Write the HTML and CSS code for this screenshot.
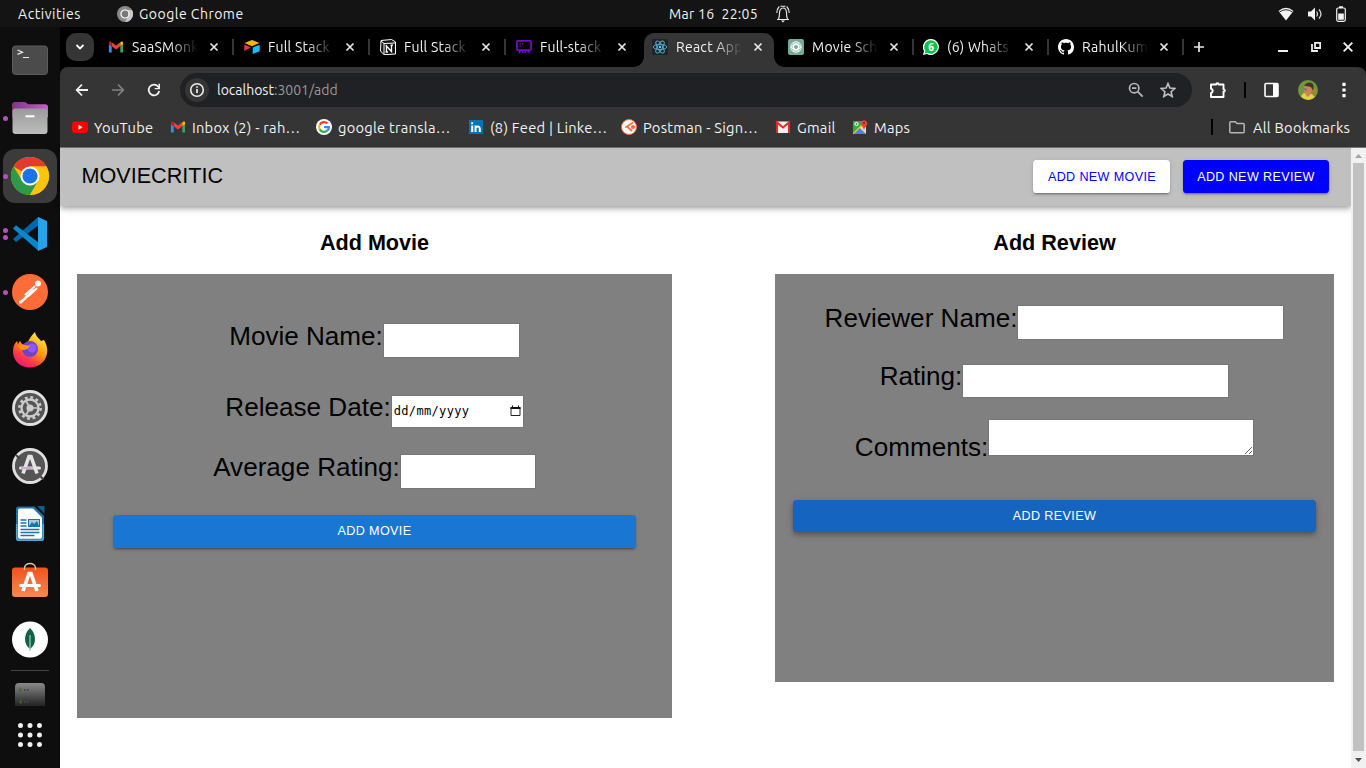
FILE: index.html
```html
<!DOCTYPE html>
<html lang="en">
<head>
<meta charset="utf-8">
<title>React App</title>
<link rel="stylesheet" href="styles.css">
</head>
<body>
<svg class="defs" width="0" height="0">
  <defs>
    <symbol id="gmail" viewBox="0 0 16 16"><path fill="#4285f4" d="M1 13.5h2.700V7.200L0.900 5v7.600q0 .9.100.9z"/><path fill="#34a853" d="M12.300 13.500H15V5l-2.700 2.200z"/><path fill="#ea4335" d="M3.700 7.300V3.200L8 6.400l4.300-3.200v4.100L8 10.600z"/><path fill="#c5221f" d="M.9 4c0-1.600 1.600-1.900 2.800-.8v4.100L.9 5.200z"/><path fill="#fbbc04" d="M15.100 4c0-1.600-1.600-1.900-2.800-.8v4.100l2.800-2.100z"/></symbol>
    <symbol id="close" viewBox="0 0 10 10"><path d="M1.500 1.500l7 7M8.500 1.500l-7 7" stroke="#e8e8e8" stroke-width="1.700" fill="none"/></symbol>
    <linearGradient id="silver" x2="0" y2="1"><stop stop-color="#9a9a9a"/><stop offset="1" stop-color="#bdbdbd"/></linearGradient>
    <linearGradient id="purple"><stop stop-color="#7f3583"/><stop offset="1" stop-color="#c660cc"/></linearGradient>
    <linearGradient id="fox" x1=".8" x2=".2" y2="1"><stop stop-color="#fff44f"/><stop offset=".45" stop-color="#ff980e"/><stop offset=".75" stop-color="#ff3647"/><stop offset="1" stop-color="#e31587"/></linearGradient>
    <linearGradient id="orange" x2="0" y2="1"><stop stop-color="#f4511e"/><stop offset="1" stop-color="#f58a50"/></linearGradient>
    <linearGradient id="disk" x2="0" y2="1"><stop stop-color="#8a8a8a"/><stop offset="1" stop-color="#222"/></linearGradient>
  </defs>
</svg>

<header class="topbar">
  <span class="activities">Activities</span>
  <svg class="app-icon" width="16" height="16" viewBox="0 0 16 16"><circle cx="8" cy="8" r="8" fill="#8b8b8b"/><path d="M8 4h7A8 8 0 0 1 8 16l3.500-6z" fill="#c9c9c9"/><circle cx="8" cy="8" r="4" fill="#777" stroke="#fff" stroke-width="1.200"/></svg>
  <span class="app-name">Google Chrome</span>
  <span class="clock">Mar 16&nbsp; 22:05</span>
  <svg class="bell" width="14" height="18" viewBox="0 0 14 18" fill="none" stroke="#eee" stroke-width="1.100"><path d="M1 14.500h12M2.500 14c1-2 1-3 1-6 0-3 1.500-5 3.500-5s3.500 2 3.500 5c0 3 0 4 1 6M.8 8c0-3 1-5 2.500-6.500M13.200 8c0-3-1-5-2.500-6.500M4.500 1.200h5"/><path d="M5 15.500h4l-2 2z" fill="#eee" stroke="none"/></svg>
  <div class="status">
    <svg width="16" height="14" viewBox="0 0 16 14"><path d="M.5 4Q8-2.500 15.500 4L8 13.500z" fill="#f2f2f2"/><path d="M1.500 5Q8 .500 14.500 5" stroke="#141414" stroke-width=".9" fill="none"/></svg>
    <svg width="16" height="14" viewBox="0 0 16 14"><path d="M1 4.500h3l4-4v13l-4-4H1z" fill="#f2f2f2"/><path d="M9.500 4.500q2 2.500 0 5M12 2.500q4 4.500 0 9" stroke="#ddd" stroke-width="1.200" fill="none"/></svg>
    <svg width="10" height="16" viewBox="0 0 10 16"><rect x=".7" y="2" width="8.600" height="13.300" rx="1.500" fill="none" stroke="#f2f2f2" stroke-width="1.200"/><path d="M3 .3h4V2H3zM2.200 7.500h5.600v6.200H2.200z" fill="#f2f2f2"/></svg>
  </div>
</header>

<div class="desktop">
  <nav class="dock">
    <div class="dock-item"><svg viewBox="0 0 60 58"><rect x="12.500" y="15" width="35" height="28.500" rx="3" fill="#4b4b4b" stroke="#5c5c5c"/><path d="M17.500 19l5 2.200-5 2.200M23 26.500h6" stroke="#eee" stroke-width="1.200" fill="none"/></svg></div>
    <div class="dock-item"><i class="dot"></i><svg viewBox="0 0 60 58"><path d="M12 16q0-3 3-3h9q2 0 4 2.200h17q3 0 3 3v10H12z" fill="url(#purple)"/><rect x="12.500" y="19.500" width="35" height="25.500" rx="3" fill="url(#silver)"/><path d="M25.500 27.300h9" stroke="#fff" stroke-width="2"/></svg></div>
    <div class="dock-item active"><i class="dot"></i><svg viewBox="0 0 60 58"><circle cx="30" cy="29" r="19" fill="#fbbc04"/><path d="M30 29L13.500 19.500A19 19 0 0 1 46.500 19.500H30z" fill="#e33b2e"/><path d="M13.500 19.500A19 19 0 0 0 30 48l8.200-14.300L30 29 22 33.500z" fill="#2c9a48"/><path d="M30 19.500h16.500A19 19 0 0 1 30 48l8.200-14.200z" fill="#fdc40e"/><circle cx="30" cy="29" r="9.500" fill="#fff"/><circle cx="30" cy="29" r="7.600" fill="#1a73e8"/></svg></div>
    <div class="dock-item"><i class="dot"></i><i class="dot"></i><svg viewBox="0 0 60 58"><path d="M13 34l3 3L39 20v-8L37.500 12.500z" fill="#0065a9"/><path d="M13 23.500l3-3.200L39 38v8L37.500 45z" fill="#0787cc"/><path d="M38 12l9 4v26l-9 4z" fill="#24a4ef"/></svg></div>
    <div class="dock-item"><i class="dot"></i><svg viewBox="0 0 60 58"><circle cx="30" cy="29" r="18" fill="#ff6c37"/><circle cx="38" cy="20.500" r="2.900" fill="#fff"/><path d="M34.500 23.500L25.500 31.500M36.500 25.500L29 32.500" stroke="#fff" stroke-width="2" stroke-linecap="round"/><path d="M20.500 39.500L34 27" stroke="#fff" stroke-width="2.400"/><circle cx="20.500" cy="39" r="1.500" fill="#fff"/></svg></div>
    <div class="dock-item"><svg viewBox="0 0 60 58"><path d="M13 30c0-5 2-8 4-10l1 3 2-3 2 3 5 1c1-5 4-9 8-13 1 5 4 6 6 9l3-1c5 8 4 16-1 22-8 8-21 7-27-1-2-3-3-6-3-10z" fill="url(#fox)"/><circle cx="30" cy="28" r="8" fill="#7540c8"/><circle cx="32" cy="27" r="4.500" fill="#9059ff"/><path d="M18 25q6-2 12 0-2 3-6 4-4 0-6-4z" fill="#ff980e"/></svg></div>
    <div class="dock-item"><svg viewBox="0 0 60 58"><circle cx="30" cy="29" r="16.500" fill="#555" stroke="#e0e0e0" stroke-width="2.800"/><circle cx="30" cy="29" r="10.600" fill="none" stroke="#ccc" stroke-width="2.600" stroke-dasharray="2.800 2.750"/><circle cx="30" cy="29" r="8.500" fill="none" stroke="#ccc" stroke-width="2.300"/><circle cx="30" cy="29" r="3.600" fill="#ccc"/><path d="M30 29h8M30 29l-4-7M30 29l-4 7" stroke="#ccc" stroke-width="1.700"/></svg></div>
    <div class="dock-item"><svg viewBox="0 0 60 58"><circle cx="30" cy="29" r="16.500" fill="#555" stroke="#e0e0e0" stroke-width="2.800"/><path d="M16 18l3.500 3.500M40.500 39.500l3 3" stroke="#444" stroke-width="2"/><path d="M23 36.500l6-17h2l6 17" fill="none" stroke="#e4e4e4" stroke-width="3.600"/><path d="M20.500 31h19" stroke="#e4e4e4" stroke-width="3" stroke-linecap="round"/><path d="M21 31h12" stroke="#cf9bd0" stroke-width="1.600"/></svg></div>
    <div class="dock-item"><svg viewBox="0 0 60 58"><path d="M18.500 11.500h16L44 21v22q0 3-3 3H19q-3 0-3-3V14q0-2.500 2.500-2.500z" fill="#1d73a8"/><path d="M19.500 13.500H33l9 9V42q0 1.800-1.800 1.800H19.500Q18 43.800 18 42V15q0-1.500 1.500-1.500z" fill="#fff"/><path d="M37 11h7.500v7.500z" fill="#0f5d91"/><path d="M16.700 29v14q0 2.300 2.300 2.300h22q2.300 0 2.300-2.300V29" fill="none" stroke="#52a9d6" stroke-width="1.600"/><path d="M20.500 25h6M20.500 28h6M20.500 31h6M20.500 34.500h19M20.500 37.500h19M20.500 40.500h14" stroke="#1d73a8" stroke-width="1.300"/><rect x="28.500" y="24.500" width="11" height="7" fill="#9bd0ed" stroke="#1d73a8"/><path d="M29 31l3-4 2 2 3-3 2 5z" fill="#1d73a8"/></svg></div>
    <div class="dock-item"><svg viewBox="0 0 60 58"><rect x="12" y="14.500" width="36" height="29.500" rx="3" fill="url(#orange)"/><path d="M24.500 17V15a5.500 4.500 0 0 1 11 0v2" fill="none" stroke="#e8c59e" stroke-width="1.400"/><path d="M23 38l6-17.500h2L37 38" fill="none" stroke="#fff" stroke-width="3.600"/><path d="M20.500 32.500h19" stroke="#fff" stroke-width="3" stroke-linecap="round"/></svg></div>
    <div class="dock-item"><svg viewBox="0 0 60 58"><circle cx="30" cy="28.500" r="18" fill="#fff"/><path d="M30 17q5 5 5 11 0 6-5 10-5-4-5-10 0-6 5-11z" fill="#116149"/><path d="M30 24v16" stroke="#9bc7ad" stroke-width="1.300"/></svg></div>
    <div class="dock-line"></div>
    <svg class="dock-disk" width="30" height="23" viewBox="0 0 30 23"><path d="M0 23V4q0-4 4-4h22q4 0 4 4v19z" fill="url(#disk)"/><path d="M4.500 7h2M4.500 19h2" stroke="#3f6a1f" stroke-width="3"/><path d="M9 7h1.500M12 7h1.500M9 19h1.500M12 19h1.500" stroke="#444" stroke-width="2"/></svg>
    <svg class="dock-grid" width="24" height="24" viewBox="0 0 24 24"><path d="M2.500 2.500h.01M12 2.500h.01M21.500 2.500h.01M2.500 12h.01M12 12h.01M21.500 12h.01M2.500 21.500h.01M12 21.500h.01M21.500 21.500h.01" stroke="#f0f0f0" stroke-width="5" stroke-linecap="round"/></svg>
  </nav>

  <main class="browser">
    <div class="tabstrip">
      <div class="tab-search"><svg width="10" height="8" viewBox="0 0 10 8"><path d="M1.500 2L5 5.500 8.500 2" stroke="#fff" stroke-width="1.800" fill="none"/></svg></div>
      <div class="tabs">
        <div class="tab sep"><svg class="fav"><use href="#gmail"/></svg><span class="tab-label">SaaSMonk</span><svg class="x"><use href="#close"/></svg></div>
        <div class="tab sep"><svg class="fav" viewBox="0 0 16 16"><path d="M8 1l7.500 3L8 7.200.5 4z" fill="#fcb400"/><path d="M8.700 8.500L15.700 5.700v6.500l-7 2.800z" fill="#18bfff"/><path d="M.3 5.500l6.500 3L.3 12z" fill="#f82b60"/></svg><span class="tab-label">Full Stack</span><svg class="x"><use href="#close"/></svg></div>
        <div class="tab sep"><svg class="fav" viewBox="0 0 16 16"><path d="M1 1.500L11.500.500 15.500 3v12L4 15.700.5 12z" fill="#111" stroke="#fff"/><path d="M1 2l3 2.500v11M4 4.500L15 4" fill="none" stroke="#fff"/><path d="M6.500 13V7l5 5.500V6.200M5.500 6.800H7M10.500 6.200h2.500M5.500 13H8" stroke="#fff" stroke-width="1.300" fill="none"/></svg><span class="tab-label">Full Stack</span><svg class="x"><use href="#close"/></svg></div>
        <div class="tab"><svg class="fav" viewBox="0 0 16 16"><rect x=".9" y="1.900" width="14.200" height="9.200" rx="1" fill="none" stroke="#6f0fbe" stroke-width="1.800"/><path d="M3.500 4.900h1.300M6 4.900h1.300M3.500 7.400h1.300" stroke="#6f0fbe" stroke-width="1.400"/><path d="M4.500 11L3 14M7 11v3M9.500 11v3M11.500 11l2 3" stroke="#6f0fbe" stroke-width="1.700"/></svg><span class="tab-label">Full-stack</span><svg class="x"><use href="#close"/></svg></div>
        <div class="tab current"><svg class="fav" viewBox="0 0 16 16"><rect width="16" height="16" rx="2" fill="#20232a"/><g fill="none" stroke="#4fb3cf" stroke-width=".9"><ellipse cx="8" cy="8" rx="6.800" ry="2.600"/><ellipse cx="8" cy="8" rx="6.800" ry="2.600" transform="rotate(60 8 8)"/><ellipse cx="8" cy="8" rx="6.800" ry="2.600" transform="rotate(120 8 8)"/></g><circle cx="8" cy="8" r="1.200" fill="#61dafb"/></svg><span class="tab-label">React App</span><svg class="x"><use href="#close"/></svg></div>
        <div class="tab sep narrow"><svg class="fav" viewBox="0 0 16 16"><rect width="16" height="16" rx="2" fill="#74aa9c"/><g fill="none" stroke="#fff" stroke-width=".8"><rect x="5" y="2.500" width="6" height="8" rx="3"/><rect x="5" y="2.500" width="6" height="8" rx="3" transform="rotate(60 8 8)"/><rect x="5" y="2.500" width="6" height="8" rx="3" transform="rotate(120 8 8)"/><rect x="5" y="2.500" width="6" height="8" rx="3" transform="rotate(180 8 8)"/><rect x="5" y="2.500" width="6" height="8" rx="3" transform="rotate(240 8 8)"/><rect x="5" y="2.500" width="6" height="8" rx="3" transform="rotate(300 8 8)"/></g></svg><span class="tab-label">Movie Sch</span><svg class="x"><use href="#close"/></svg></div>
        <div class="tab sep narrow"><svg class="fav" viewBox="0 0 16 16"><path d="M8 0a8 8 0 1 1-4 15L0 16l1-4A8 8 0 0 1 8 0z" fill="#fff"/><path d="M8 1.200a6.800 6.800 0 1 1-3.600 12.600l-2.700.6.700-2.600A6.800 6.800 0 0 1 8 1.200z" fill="#0bc34b"/><text x="8" y="12" text-anchor="middle" class="badge">6</text></svg><span class="tab-label">(6) Whats</span><svg class="x"><use href="#close"/></svg></div>
        <div class="tab sep narrow"><svg class="fav" viewBox="0 0 16 16"><path fill="#fff" d="M8 0C3.580 0 0 3.580 0 8c0 3.540 2.290 6.530 5.470 7.590.4.070.55-.17.55-.38 0-.19-.010-.82-.010-1.490-2.010.37-2.530-.49-2.690-.94-.09-.23-.48-.94-.82-1.130-.28-.15-.68-.52-.010-.53.63-.010 1.080.58 1.230.82.72 1.210 1.870.87 2.330.66.070-.52.28-.87.51-1.070-1.780-.2-3.640-.89-3.640-3.950 0-.87.31-1.590.82-2.150-.080-.2-.36-1.020.080-2.120 0 0 .67-.21 2.200.82.64-.18 1.320-.27 2-.27s1.360.09 2 .27c1.530-1.040 2.200-.82 2.200-.82.44 1.100.16 1.920.080 2.120.51.56.82 1.270.82 2.150 0 3.070-1.870 3.750-3.650 3.950.29.25.54.73.54 1.480 0 1.070-.010 1.930-.010 2.200 0 .21.15.46.55.38A8 8 0 0 0 16 8c0-4.420-3.580-8-8-8z"/></svg><span class="tab-label">RahulKum</span><svg class="x"><use href="#close"/></svg></div>
      </div>
      <svg class="new-tab" width="12" height="12" viewBox="0 0 12 12"><path d="M6 1v10M1 6h10" stroke="#e8e8e8" stroke-width="1.700"/></svg>
      <div class="win-buttons">
        <svg width="10" height="12" viewBox="0 0 10 12"><path d="M0 10h10" stroke="#eee" stroke-width="2"/></svg>
        <svg width="10" height="12" viewBox="0 0 10 12"><path d="M4 1.800h5.200V7H4zM1 3v7h6" fill="none" stroke="#eee" stroke-width="1.800"/></svg>
        <svg width="10" height="12" viewBox="0 0 10 12"><path d="M.7 1.700l8.600 8.600M9.300 1.700L.7 10.300" stroke="#eee" stroke-width="1.900"/></svg>
      </div>
    </div>

    <div class="toolbar">
      <div class="nav-buttons">
        <svg width="14" height="14" viewBox="0 0 14 14"><path d="M7 1.500L1.700 7 7 12.500M2 7h11" stroke="#f1f1f1" stroke-width="1.800" fill="none"/></svg>
        <svg width="14" height="14" viewBox="0 0 14 14"><path d="M7 1.500L12.300 7 7 12.500M12 7H1" stroke="#828282" stroke-width="1.700" fill="none"/></svg>
        <svg width="14" height="14" viewBox="0 0 14 14"><path d="M12.200 8A5.300 5.300 0 1 1 11 3.500L12.500 5" stroke="#f1f1f1" stroke-width="1.800" fill="none"/><path d="M13 .7v5.500H7.700V5H11.500V.7z" fill="#f1f1f1"/></svg>
      </div>
      <div class="omnibox">
        <svg class="info" width="24" height="24" viewBox="0 0 24 24"><circle cx="12" cy="12" r="12" fill="#353535"/><circle cx="12" cy="12" r="6.300" fill="none" stroke="#eee" stroke-width="1.600"/><path d="M12 11v4M12 8.300v1.500" stroke="#eee" stroke-width="1.700"/></svg>
        <span class="url">localhost<em>:3001/add</em></span>
        <svg width="16" height="16" viewBox="0 0 16 16"><circle cx="6.200" cy="6.200" r="4.700" fill="none" stroke="#b5b5b5" stroke-width="1.700"/><path d="M4 6.200h4.400M9.700 9.700l5 5" stroke="#b5b5b5" stroke-width="1.800"/></svg>
        <svg width="16" height="16" viewBox="0 0 16 16"><path d="M8 1.500l1.900 4.600 4.900.4-3.700 3.200 1.100 4.800L8 12l-4.200 2.500 1.100-4.800L1.200 6.500l4.900-.4z" fill="none" stroke="#c0c0c0" stroke-width="1.600"/></svg>
      </div>
      <svg class="puzzle" width="18" height="18" viewBox="0 0 18 18"><path d="M2 3.500h5.200a1.200 1.200 0 0 1 2.400 0H14.500v4.700a1.200 1.200 0 0 1 0 2.600V16H2v-4a2.200 2.200 0 0 0 0-4.300z" fill="none" stroke="#fff" stroke-width="1.900" stroke-linejoin="round"/></svg>
      <i class="bar"></i>
      <svg class="panel-icon" width="15" height="16" viewBox="0 0 15 16"><rect x="1" y="1.500" width="13" height="13" rx="1" fill="none" stroke="#fff" stroke-width="1.600"/><path d="M9 1.500H14v13H9z" fill="#fff"/></svg>
      <svg class="avatar" width="20" height="20" viewBox="0 0 20 20"><circle cx="10" cy="10" r="10" fill="#6d9a38"/><path d="M3 17q2-5 5-4l6 1 3 3q-6 6-14 0z" fill="#e3cf4a"/><path d="M6 7q4-5 8.500 0l-1.500 7-3.500 3-3.500-5z" fill="#c98552"/><path d="M6 5.500q4-5 8.500-2 2 3 .5 7l-2-3.500z" fill="#4a3326"/><path d="M5 8l4 1-1 2z" fill="#4b6de8"/><path d="M16 8l2.500 3-3 5z" fill="#d5702c"/></svg>
      <svg class="dots" width="4" height="16" viewBox="0 0 4 16"><path d="M.4.800h3.200V4H.4zM.4 6.400h3.200v3.200H.4zM.4 12h3.200v3.200H.4z" fill="#fff"/></svg>
    </div>

    <div class="bookmarks">
      <div class="bm youtube"><svg viewBox="0 0 16 16"><rect y="2.500" width="16" height="11.500" rx="3" fill="#f00"/><path d="M6.500 5.800v5l4-2.500z" fill="#fff"/></svg>YouTube</div>
      <div class="bm inbox"><svg viewBox="0 0 16 16"><use href="#gmail"/></svg>Inbox (2) - rah…</div>
      <div class="bm google"><svg viewBox="0 0 16 16"><circle cx="8" cy="8" r="8" fill="#fff"/><g fill="none" stroke-width="2.200"><path d="M11.500 4.500A4.900 4.900 0 0 0 3.700 5.700" stroke="#ea4335"/><path d="M3.700 5.700a4.900 4.900 0 0 0 0 4.700" stroke="#fbbc05"/><path d="M3.700 10.400a4.900 4.900 0 0 0 7.500 1.300" stroke="#34a853"/><path d="M8 8.200h4.900q0 2.200-1.700 3.500" stroke="#4285f4"/></g></svg>google transla…</div>
      <div class="bm linkedin"><svg viewBox="0 0 16 16"><rect x="1" y="1" width="14" height="14" fill="#0073b1"/><path d="M4.200 6.500V13M4.200 3.300v2M7.500 13V6.500M7.500 9q.5-1.600 2.200-1.600T11.800 9.500V13" fill="none" stroke="#fff" stroke-width="2"/></svg>(8) Feed | Linke…</div>
      <div class="bm postman"><svg viewBox="0 0 16 16"><circle cx="8" cy="8" r="7.500" fill="#fff" stroke="#ff6c37"/><path d="M12 3.500L6 7.500l5 4.500M6 8h-2" fill="none" stroke="#ff6c37" stroke-width="1.700"/><circle cx="12" cy="8" r="2" fill="#ff6c37"/></svg>Postman - Sign…</div>
      <div class="bm mail"><svg viewBox="0 0 16 16"><rect x="1" y="2.500" width="14" height="11.500" rx="1" fill="#f2f2f2"/><path d="M2 14V3.500l6 5 6-5V14" fill="none" stroke="#d93025" stroke-width="2.100"/></svg>Gmail</div>
      <div class="bm maps"><svg viewBox="0 0 16 16"><rect x="1" y="2" width="13" height="13" rx="1" fill="#34a853"/><path d="M1 14L10 5l4 5v5H1z" fill="#fbbc04"/><path d="M2 15l6-6 6 6z" fill="#4285f4"/><path d="M8 9l6 5.500V8l-3-2z" fill="#ddd"/><circle cx="4.500" cy="5" r="1.600" fill="none" stroke="#fff"/><path d="M12 11q-1-3-2.500-4.500a3.200 3.200 0 1 1 5 0Q13 8 12 11z" fill="#ea4335"/><circle cx="12" cy="4" r="1" fill="#8c1a13"/></svg>Maps</div>
      <i class="bar push"></i>
      <div class="bm all"><svg viewBox="0 0 16 16"><path d="M.8 3.800q0-1 1-1h4.500L8 4.500h6.200q1 0 1 1v7.200q0 1-1 1H1.800q-1 0-1-1z" fill="none" stroke="#b5b5b5" stroke-width="1.500"/></svg>All Bookmarks</div>
    </div>

    <div class="viewport">
      <div class="page">
        <header class="appbar">
          <span class="brand">MOVIECRITIC</span>
          <button class="btn white">ADD NEW MOVIE</button>
          <button class="btn blue">ADD NEW REVIEW</button>
        </header>
        <div class="columns">
          <section class="col-movie">
            <h2>Add Movie</h2>
            <form class="card">
              <label class="row r-name">Movie Name:<input type="text" class="f-name"></label>
              <label class="row r-date">Release Date:<span class="f-date">dd/mm/yyyy<svg width="11" height="12" viewBox="0 0 11 12"><path d="M1 2.500h9v8H1z" fill="none" stroke="#222" stroke-width="1"/><path d="M.5 2h10v2H.5zM2 .5h1v2H2zM8 .5h1v2H8z" fill="#111"/></svg></span></label>
              <label class="row r-avg">Average Rating:<input type="text" class="f-avg"></label>
              <button type="button" class="btn primary">ADD MOVIE</button>
            </form>
          </section>
          <section class="col-review">
            <h2>Add Review</h2>
            <form class="card">
              <label class="row r-reviewer">Reviewer Name:<input type="text" class="f-reviewer"></label>
              <label class="row r-rating">Rating:<input type="text" class="f-rating"></label>
              <label class="row r-comments"><span>Comments:</span><textarea></textarea></label>
              <button type="button" class="btn primary hovered">ADD REVIEW</button>
            </form>
          </section>
        </div>
      </div>
      <div class="scrollbar">
        <svg width="15" height="15" viewBox="0 0 15 15"><path d="M4 10l3.500-4L11 10z" fill="#a3a3a3"/></svg>
        <div class="thumb"></div>
        <svg width="15" height="17" viewBox="0 0 15 17"><path d="M4 7h7l-3.500 4z" fill="#505050"/></svg>
      </div>
    </div>
  </main>
</div>
</body>
</html>
```
FILE: styles.css
```css
* { box-sizing: border-box; }
body {
  margin: 0; width: 1366px; height: 768px; overflow: hidden;
  display: flex; flex-direction: column; background: #0e0e0e;
  font-family: Ubuntu, "Noto Sans", sans-serif; font-size: 14px; color: #f2f2f2;
}
svg { display: block; flex: none; }
.defs { position: absolute; }

.topbar { height: 27px; flex: none; display: flex; align-items: center; background: #141414; padding: 0 20px 0 18px; }
.activities { width: 99px; letter-spacing: .55px; }
.app-icon { margin-right: 6px; }
.app-name { width: 530px; letter-spacing: .5px; }
.clock { width: 107px; letter-spacing: .3px; }
.status { margin-left: auto; display: flex; align-items: center; gap: 13px; }

.desktop { flex: 1; display: flex; min-height: 0; }
.dock { width: 60px; flex: none; padding-top: 4px; display: flex; flex-direction: column; align-items: center; }
.dock-item { position: relative; width: 60px; height: 58px; flex: none; display: flex; flex-direction: column; justify-content: center; gap: 2px; padding-left: 3px; }
.dock-item > svg { position: absolute; left: 0; top: 0; width: 60px; height: 58px; }
.dock-item.active::before { content: ""; position: absolute; left: 3px; top: 2px; width: 54px; height: 54px; border-radius: 12px; background: #3b3b3b; }
.dot { width: 5px; height: 5px; border-radius: 50%; background: #b74fbd; z-index: 1; }
.dock-line { width: 38px; height: 1px; background: #444; margin: 1px 0 12px; }
.dock-disk { margin-bottom: 17px; }

.browser { flex: 1; display: flex; flex-direction: column; min-width: 0; background: #000; }
.tabstrip { height: 40px; display: flex; align-items: center; padding: 0 13px 0 6px; }
.tab-search { width: 28px; height: 28px; border-radius: 10px; background: #353535; display: flex; align-items: center; justify-content: center; margin-right: 6px; }
.tabs { display: flex; height: 40px; padding-top: 6px; }
.tab { width: 136px; height: 34px; padding: 0 0 6px 8px; display: flex; align-items: center; position: relative; }
.narrow { width: 135px; }
.fav { width: 16px; height: 16px; margin-right: 8px; }
.tab-label { width: 66px; letter-spacing: .25px; overflow: hidden; white-space: nowrap; -webkit-mask-image: linear-gradient(90deg, #000 58%, transparent); mask-image: linear-gradient(90deg, #000 58%, transparent); }
.x { width: 10px; height: 10px; margin-left: 11px; }
.tab.sep::after { content: ""; position: absolute; left: 132px; top: 6px; width: 2px; height: 16px; background: #353535; }
.current { z-index: 1; }
.current::before { content: ""; position: absolute; inset: 0 6px 0 0; background: #353535; border-radius: 10px 10px 0 0; z-index: -1; }
.current::after {
  content: ""; position: absolute; left: -10px; right: -4px; bottom: 0; height: 10px; z-index: -2;
  background:
    radial-gradient(circle at 0 0, transparent 9.500px, #353535 10px) left / 10px 10px no-repeat,
    radial-gradient(circle at 100% 0, transparent 9.500px, #353535 10px) right / 10px 10px no-repeat;
}
.badge { font: bold 10px "Noto Sans", sans-serif; fill: #fff; }
.new-tab { margin-left: 8px; }
.win-buttons { margin-left: auto; display: flex; gap: 22.500px; }

.toolbar { height: 46px; flex: none; background: #353535; border-radius: 8px 8px 0 0; display: flex; align-items: center; padding: 0 20px 0 15px; }
.nav-buttons { display: flex; gap: 22px; width: 105px; }
.omnibox { width: 1012px; height: 34px; border-radius: 17px; background: #202124; display: flex; align-items: center; gap: 16px; padding: 0 16px 0 5px; }
.url { flex: 1; margin-left: -8px; }
.url em { font-style: normal; color: #9a9a9a; }
.puzzle { margin-left: 17px; }
.bar { width: 2px; height: 16px; background: #000; }
.toolbar .bar { margin: 0 18px 0 17px; }
.avatar { margin-left: 19px; }
.dots { margin-left: auto; }

.bookmarks { height: 35px; flex: none; background: #353535; border-bottom: 1px solid #777; display: flex; align-items: center; padding: 0 14px 6px 12px; white-space: nowrap; font-size: 14.670px; letter-spacing: .25px; }
.bm { display: flex; align-items: center; gap: 6px; }
.bm svg { width: 16px; height: 16px; }
.youtube { width: 98px; }
.inbox { width: 146px; }
.google { width: 152px; }
.linkedin { width: 153px; }
.postman { width: 154px; }
.mail { width: 77px; }
.push { margin-left: auto; }
.all { width: 123px; margin-left: 16px; gap: 8px; }

.viewport { flex: 1; display: flex; min-height: 0; background: #fff; color: #000; font-family: "Liberation Sans", Arial, sans-serif; }
.page { flex: 1; min-width: 0; }
.appbar { height: 58px; background: #c0c0c0; display: flex; align-items: center; padding: 0 22px 2px 21.500px; box-shadow: 0 2px 4px -1px rgba(0,0,0,.2), 0 4px 5px rgba(0,0,0,.14), 0 1px 9px rgba(0,0,0,.12); }
.brand { font-size: 21.600px; flex: 1; }
.btn { border: 0; border-radius: 3.600px; height: 33px; padding: 0; font: 12.600px "Liberation Sans", Arial, sans-serif; letter-spacing: .36px; box-shadow: 0 3px 1px -2px rgba(0,0,0,.2), 0 2px 2px rgba(0,0,0,.14), 0 1px 5px rgba(0,0,0,.12); }
.white { width: 137px; background: #fff; color: #00f; margin-right: 13px; padding: 1px 0 0 1px; }
.blue { width: 146px; background: #00f; color: #fff; padding-top: 1px; }
.columns { display: flex; padding: 0 17px; justify-content: space-between; }
.col-movie { width: 595px; }
.col-review { width: 559px; }
h2 { margin: 0; height: 68px; line-height: 73px; font-size: 21.600px; text-align: center; }
.card { background: #808080; display: flex; flex-direction: column; }
.col-movie .card { height: 444px; padding: 47px 36px 0; }
.col-review .card { height: 408px; padding: 29px 18px 0; }
.row { display: flex; justify-content: center; align-items: flex-start; font-size: 26.100px; line-height: 30px; white-space: nowrap; }
input, textarea, .f-date { border: 1px solid #767676; background: #fff; padding: 0; margin: 2px 0 0; display: block; }
.r-name { height: 71px; }
.r-date { height: 60px; }
.r-avg { height: 63px; }
.f-name { width: 137px; height: 35px; }
.f-date { width: 133px; height: 33px; margin-top: 3px; display: flex; align-items: center; justify-content: space-between; padding: 0 2px 1px 2px; font: 12px "DejaVu Sans Mono", monospace; letter-spacing: .35px; }
.f-avg { width: 136px; height: 35px; }
.r-reviewer { height: 58px; }
.r-rating { height: 58px; }
.r-comments { height: 81px; }
.r-comments span { margin-top: 13px; }
.f-reviewer { width: 267px; height: 35px; }
.f-rating { width: 267px; height: 34px; margin-top: 3px; }
textarea { width: 266px; height: 37px; margin-top: 0; }
.primary { background: #1976d2; color: #fff; padding-bottom: 2px; }
.hovered { height: 32px; padding-bottom: 0; background: #1565c0; box-shadow: 0 2px 4px -1px rgba(0,0,0,.2), 0 4px 5px rgba(0,0,0,.14), 0 1px 10px rgba(0,0,0,.12); }
.scrollbar { width: 15px; background: #f1f1f1; display: flex; flex-direction: column; }
.thumb { flex: 1; margin: 0 2px; background: #c1c1c1; }
```
